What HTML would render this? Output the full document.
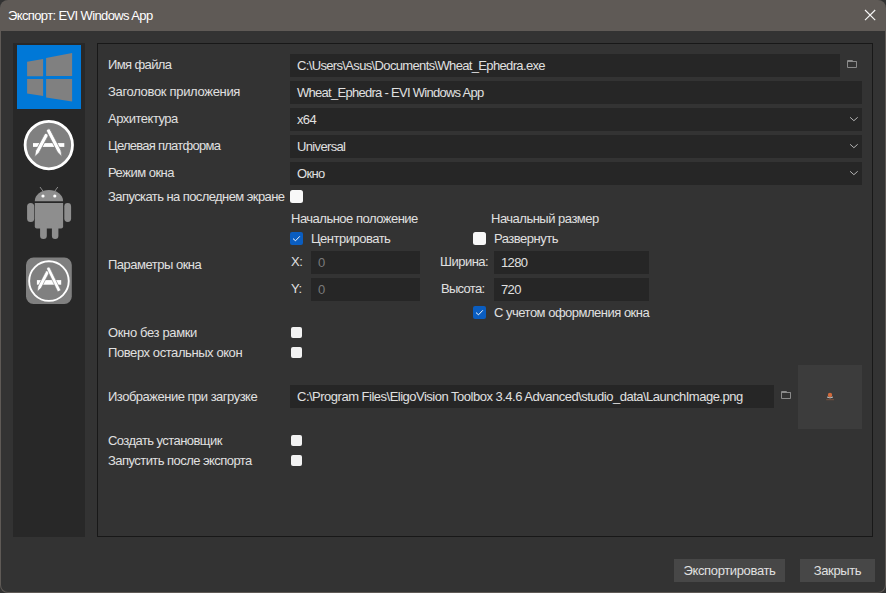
<!DOCTYPE html>
<html><head><meta charset="utf-8">
<style>
*{box-sizing:border-box;margin:0;padding:0}
html,body{width:886px;height:593px;overflow:hidden;background:#323232}
body{font-family:"Liberation Sans",sans-serif;font-size:13px;letter-spacing:-0.5px;color:#e0e0e0;position:relative}
.abs{position:absolute}
#win{position:absolute;left:0;top:0;width:886px;height:593px;border-radius:8px;background:#5f5a56;overflow:hidden}
#title{position:absolute;left:8px;top:8px;color:#fff;font-size:13px;line-height:16px;letter-spacing:-0.62px}
#close{position:absolute;left:864px;top:9px;width:12px;height:12px}
#body{position:absolute;left:1px;top:31px;width:884px;height:561px;background:#333333;border-radius:0 0 7px 7px}
#side{position:absolute;left:13px;top:43px;width:72px;height:494px;background:#282828}
#panel{position:absolute;left:97px;top:43px;width:776px;height:494px;border:1px solid #181818;background:#333333}
.lbl{position:absolute;left:108px;line-height:16px;white-space:nowrap}
.txt{position:absolute;line-height:16px;white-space:nowrap}
.inp{position:absolute;background:#262626;height:23px}
.inp span{position:absolute;left:7px;top:4px;letter-spacing:-0.65px;line-height:16px;white-space:nowrap}
.cb{position:absolute;width:13px;height:13px;border-radius:2.5px;background:#f8f8f8}
.cbs{width:11px;height:11px;border-radius:2px;background:#f2f2f2}
.cbc{position:absolute;width:13px;height:13px;border-radius:2px;background:#0a5dc0}
.chev{position:absolute;width:9px;height:6px}
.btn{position:absolute;top:559px;height:23px;background:#474747;text-align:center;line-height:23px;letter-spacing:-0.36px}
</style></head><body>
<div id="win">
  <div id="title">Экспорт: EVI Windows App</div>
  <svg id="close" viewBox="0 0 12 12"><path d="M1 1L11.2 11.2M11.2 1L1 11.2" stroke="#f6f6f6" stroke-width="1.15"/></svg>
  <div id="body"></div>
</div>
<div id="side"></div>
<div id="panel"></div>
<svg class="abs" style="left:0;top:0" width="886" height="320" viewBox="0 0 886 320">
  <rect x="17" y="45" width="64" height="64" fill="#0078d7"/>
  <g fill="#808080">
    <path d="M27.1 61.7L43.1 58.9L43.1 76.3L27.1 76.3Z"/>
    <path d="M46.1 57.9L72.1 53.1L72.1 76.1L46.1 76.1Z"/>
    <path d="M27.1 78.9L43.1 78.9L43.1 96.1L27.1 93.5Z"/>
    <path d="M46.1 78.9L72.1 78.9L72.1 101.6L46.1 97.4Z"/>
  </g>
  <!-- app store circle -->
  <circle cx="48.8" cy="145.1" r="23.7" fill="#808080" stroke="#fff" stroke-width="2.8"/>
  <rect x="33" y="143.1" width="31.3" height="3.8" fill="#fff"/>
  <path d="M44.34 134.55A2 2 0 0 1 47.86 136.45L39.08 152.76L34.7 156.8L35.56 150.86Z" fill="#fff" stroke="#808080" stroke-width="0.8"/>
  <path d="M46.82 131.82A2 2 0 0 1 50.38 129.98L58.44 145.51Q61.5 149.3 61.9 156.6Q56.4 152.2 54.88 147.35Z" fill="#fff" stroke="#808080" stroke-width="0.8"/>
  <!-- android -->
  <g fill="#8e8e8e">
    <path d="M34.8 201.2A14.15 11.2 0 0 1 63.1 201.2Z"/>
    <path d="M34.8 203H63.1V226.4Q63.1 228.4 61.1 228.4H36.8Q34.8 228.4 34.8 226.4Z"/>
    <rect x="27.1" y="203" width="7.1" height="18.9" rx="3.5"/>
    <rect x="64.3" y="203" width="6.8" height="18.9" rx="3.4"/>
    <rect x="40.1" y="222" width="6.7" height="17" rx="3.3"/>
    <rect x="51.9" y="222" width="6.5" height="17" rx="3.2"/>
  </g>
  <path d="M40 187L43 191.2M57.8 187L54.8 191.2" stroke="#8e8e8e" stroke-width="1"/>
  <circle cx="43" cy="196" r="1.6" fill="#fff"/>
  <circle cx="54.8" cy="196" r="1.6" fill="#fff"/>
  <!-- app store square -->
  <rect x="26" y="257.6" width="45.8" height="46.4" rx="7.5" fill="#808080"/>
  <circle cx="48.95" cy="281.1" r="19.8" fill="none" stroke="#fff" stroke-width="1.9"/>
  <rect x="36.9" y="280.1" width="24.3" height="4.6" fill="#fff"/>
  <path d="M45.6 271.77A1.8 1.8 0 0 1 48.8 273.43L41.17 288.06L37.4 291.4L37.97 286.4Z" fill="#fff" stroke="#808080" stroke-width="0.6"/>
  <path d="M46.97 269.54A1.7 1.7 0 0 1 50.03 268.06L60.83 290.36L57.77 291.84Z" fill="#fff" stroke="#808080" stroke-width="0.6"/>
</svg>

<!-- rows -->
<div class="lbl" style="top:57px;letter-spacing:-0.62px">Имя файла</div>
<div class="inp" style="left:290px;top:54px;width:550px"><span>C:\Users\Asus\Documents\Wheat_Ephedra.exe</span></div>

<div class="lbl" style="top:84px;letter-spacing:-0.32px">Заголовок приложения</div>
<div class="inp" style="left:290px;top:81px;width:572px"><span style="letter-spacing:-0.72px">Wheat_Ephedra - EVI Windows App</span></div>

<div class="lbl" style="top:111px">Архитектура</div>
<div class="inp" style="left:290px;top:108px;width:572px"><span>x64</span></div>

<div class="lbl" style="top:138px;letter-spacing:-0.74px">Целевая платформа</div>
<div class="inp" style="left:290px;top:135px;width:572px"><span>Universal</span></div>

<div class="lbl" style="top:165px">Режим окна</div>
<div class="inp" style="left:290px;top:162px;width:572px"><span>Окно</span></div>

<div class="lbl" style="top:189px;letter-spacing:-0.58px">Запускать на последнем экране</div>
<div class="cb" style="left:290px;top:190px"></div>

<div class="txt" style="left:291px;top:211px">Начальное положение</div>
<div class="cbc" style="left:290px;top:232px"></div>
<div class="txt" style="left:311px;top:231px">Центрировать</div>
<div class="txt" style="left:491px;top:211px">Начальный размер</div>
<div class="cb" style="left:473px;top:232px"></div>
<div class="txt" style="left:494px;top:231px">Развернуть</div>

<div class="lbl" style="top:257px">Параметры окна</div>
<div class="txt" style="left:291px;top:254px">X:</div>
<div class="inp" style="left:311px;top:251px;width:109px"><span style="color:#7a7a7a">0</span></div>
<div class="txt" style="left:291px;top:281px">Y:</div>
<div class="inp" style="left:311px;top:278px;width:109px"><span style="color:#7a7a7a">0</span></div>
<div class="txt" style="left:440px;top:254px">Ширина:</div>
<div class="inp" style="left:494px;top:251px;width:155px"><span>1280</span></div>
<div class="txt" style="left:441px;top:281px;letter-spacing:-0.7px">Высота:</div>
<div class="inp" style="left:494px;top:278px;width:155px"><span>720</span></div>
<div class="cbc" style="left:473px;top:306px"></div>
<div class="txt" style="left:494px;top:305px">С учетом оформления окна</div>

<div class="lbl" style="top:325px;letter-spacing:-0.36px">Окно без рамки</div>
<div class="cb cbs" style="left:291px;top:327px"></div>
<div class="lbl" style="top:345px;letter-spacing:-0.42px">Поверх остальных окон</div>
<div class="cb cbs" style="left:291px;top:347px"></div>

<div class="lbl" style="top:389px">Изображение при загрузке</div>
<div class="inp" style="left:290px;top:385px;width:484px"><span style="letter-spacing:-0.5px">C:\Program Files\EligoVision Toolbox 3.4.6 Advanced\studio_data\LaunchImage.png</span></div>
<div class="abs" style="left:798px;top:365px;width:64px;height:64px;background:#3c3c3c"></div>

<div class="lbl" style="top:433px;letter-spacing:-0.56px">Создать установщик</div>
<div class="cb cbs" style="left:291px;top:435px"></div>
<div class="lbl" style="top:453px;letter-spacing:-0.55px">Запустить после экспорта</div>
<div class="cb cbs" style="left:291px;top:455px"></div>

<div class="btn" style="left:674px;width:111px">Экспортировать</div>
<div class="btn" style="left:800px;width:75px">Закрыть</div>
<svg class="abs" style="left:0;top:0" width="886" height="593" viewBox="0 0 886 593">
  <g fill="none" stroke="#8a8a8a" stroke-width="1">
    <path d="M847.5 67.5V60.5H852.5L853.5 61.5H856.5V67.5Z M847.5 61.5H856.5"/>
    <path d="M781.5 398.5V391.5H786.5L787.5 392.5H790.5V398.5Z M781.5 392.5H790.5"/>
  </g>
  <g fill="none" stroke="#c4c4c4" stroke-width="0.9">
    <path d="M850.1 117.3L853.9 120.7L857.7 117.3"/>
    <path d="M850.1 144.3L853.9 147.7L857.7 144.3"/>
    <path d="M850.1 171.3L853.9 174.7L857.7 171.3"/>
  </g>
  <g fill="none" stroke="#fff" stroke-width="0.95">
    <path d="M293 238.6L295.5 240.8L299.8 236.3"/>
    <path d="M476 312.6L478.5 314.8L482.8 310.3"/>
  </g>
  <circle cx="830" cy="395" r="2.2" fill="#d06a3c"/>
  <path d="M827 397Q830 398.8 833 397" stroke="#d0d0d0" stroke-width="0.9" fill="none"/>
  <rect x="826.2" y="399.2" width="7.8" height="1" fill="#a8603c" opacity="0.55"/>
</svg>
</body></html>
